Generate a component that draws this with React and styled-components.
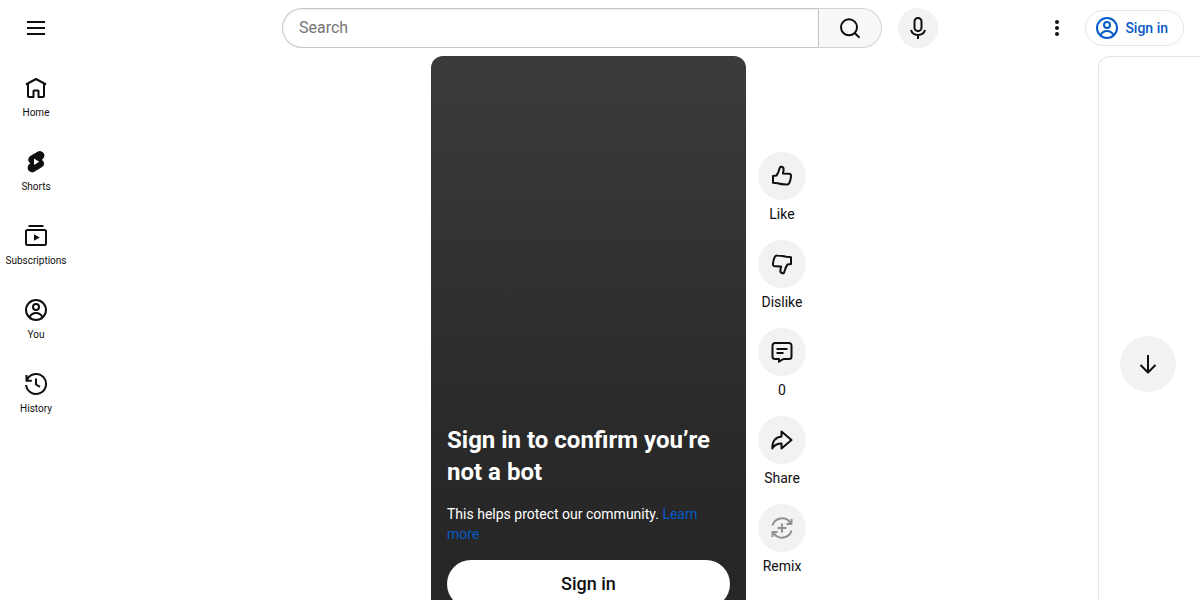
import React, { useState } from 'react';
import styled, { createGlobalStyle } from 'styled-components'

const GlobalStyle = createGlobalStyle`
  * {
    box-sizing: border-box;
  }
  body {
    margin: 0;
    background: #fff;
    color: #0f0f0f;
    font-family: Roboto, Arial, sans-serif;
  }
  button, input {
    font-family: inherit;
    color: inherit;
  }
`

const icons = {
  menu: <path d="M3 6h18M3 12h18M3 18h18" />,
  home: <path d="M2 8.5 12 3l10 5.5M4 8v12a1 1 0 0 0 1 1h4.500v-6a.5.5 0 0 1 .5-.5h4a.5.5 0 0 1 .5.5v6H19a1 1 0 0 0 1-1V8" />,
  shorts: (
    <g stroke="none">
      <path fill="currentColor" d="M13.500 1.800 6.300 6A4.200 4.200 0 0 0 5.900 13l.6.500-.5.300a4.200 4.200 0 0 0 4.300 7.900l7.800-4.600a4.200 4.200 0 0 0 .3-6.900l-.6-.5.500-.3a4.200 4.200 0 0 0-4.800-7.600z" />
      <path fill="#fff" d="M10 8.500v6.500l5.200-3.200z" />
    </g>
  ),
  subscriptions: (
    <>
      <path d="M4.500 2h15" />
      <rect x="2" y="6" width="20" height="15" rx="1.5" />
      <path d="M10 10.2v6.600l5.800-3.300z" fill="currentColor" stroke="none" />
    </>
  ),
  account: (
    <>
      <circle cx="12" cy="12" r="10" />
      <circle cx="12" cy="9" r="3" />
      <path d="M5.500 19.300c1.200-2.600 3.600-4.200 6.500-4.200s5.300 1.600 6.500 4.200" />
    </>
  ),
  history: (
    <>
      <path d="M2.100 13a10 10 0 1 0 1.500-6.400L2.800 8.200M2.500 3v5.800h5.300" />
      <path d="M12 6.500v6l4 2.300" />
    </>
  ),
  search: <path d="M11 3.300a8 8 0 1 1 0 16 8 8 0 0 1 0-16zM16.700 17l4.800 4.700" />,
  mic: (
    <>
      <rect x="8.500" y="2" width="7" height="13" rx="3.500" />
      <path d="M5 14c.9 3.200 3.600 5 7 5s6.100-1.800 7-5M12 19v4" />
    </>
  ),
  more: (
    <g fill="currentColor" stroke="none">
      <circle cx="12" cy="6" r="2" />
      <circle cx="12" cy="12" r="2" />
      <circle cx="12" cy="18" r="2" />
    </g>
  ),
  like: <path d="M3 12l3.500-.5c1.800-2.200 2.500-4.700 3.300-7.700.2-.9.800-1.300 1.600-1.100 1.700.4 2.500 1.700 2.200 3.400L12.900 9.500l5.800.2c1.800.1 2.600 1 2.400 2.500-.3 2.700-1 5.400-2.100 7.200-.5.900-1.400 1.300-2.600 1.200-3-.1-6-.4-8.700-1.300L3 18.700z" />,
  comment: (
    <>
      <path d="M5 3h14a2.500 2.500 0 0 1 2.500 2.500v11A2.500 2.500 0 0 1 19 19h-5.500L9 21.700V19H5a2.500 2.500 0 0 1-2.500-2.500v-11A2.500 2.500 0 0 1 5 3z" />
      <path d="M6.500 9h11M6.500 13h7" />
    </>
  ),
  share: <path d="M11.500 3.500 21.500 12l-10 8.500v-5c-4 0-7.200 1.700-9.200 5 0-7 3.200-11.500 9.200-12z" />,
  remix: (
    <>
      <path d="M2.500 9.500C4.700 1.500 15.800-.5 20.600 7.300M21.500 3v5h-5" />
      <path d="M21.500 14.500c-2.200 8-13.300 10-18.100 2.200M2.500 21v-5h5" />
      <path d="M12 7.500v9M7.500 12h9" />
    </>
  ),
  down: <path d="M12 3v17M4.500 13l7.500 7.500 7.500-7.500" />,
}

const Icon = ({ name, flip }) => (
  <Svg viewBox="0 0 24 24" $flip={flip} aria-hidden="true">{icons[name]}</Svg>
)

const guide = [
  { icon: 'home', label: 'Home' },
  { icon: 'shorts', label: 'Shorts' },
  { icon: 'subscriptions', label: 'Subscriptions' },
  { icon: 'account', label: 'You' },
  { icon: 'history', label: 'History' },
]

const actions = [
  { icon: 'like', label: 'Like' },
  { icon: 'like', label: 'Dislike', flip: true },
  { icon: 'comment', label: '0' },
  { icon: 'share', label: 'Share' },
  { icon: 'remix', label: 'Remix', disabled: true },
]

const App = () => {
  const [query, setQuery] = useState('');

  return (
    <Page>
      <GlobalStyle />
      <Header>
        <Start>
          <IconButton aria-label="Guide"><Icon name="menu" /></IconButton>
        </Start>
        <Center>
          <SearchForm onSubmit={(e) => e.preventDefault()}>
            <SearchInput
              placeholder="Search"
              aria-label="Search"
              value={query}
              onChange={(e) => setQuery(e.target.value)}
            />
            <SearchButton aria-label="Submit search"><Icon name="search" /></SearchButton>
          </SearchForm>
          <IconButton $filled aria-label="Search with your voice"><Icon name="mic" /></IconButton>
        </Center>
        <End>
          <IconButton aria-label="Settings"><Icon name="more" /></IconButton>
          <SignInLink href="#signin"><Icon name="account" />Sign in</SignInLink>
        </End>
      </Header>
      <Body>
        <Guide>
          {guide.map(({ icon, label }) => (
            <GuideItem key={label} href={'#' + label.toLowerCase()}>
              <Icon name={icon} />
              {label}
            </GuideItem>
          ))}
        </Guide>
        <Stage>
          <Player>
            <Title>Sign in to confirm you’re not a bot</Title>
            <Text>This helps protect our community. <Link href="#learn">Learn more</Link></Text>
            <SignInButton>Sign in</SignInButton>
          </Player>
          <Actions>
            {actions.map(({ icon, label, flip, disabled }) => (
              <Action key={label}>
                <Round disabled={disabled}><Icon name={icon} flip={flip} /></Round>
                {label}
              </Action>
            ))}
          </Actions>
        </Stage>
        <Panel>
          <Round $large aria-label="Next video"><Icon name="down" /></Round>
        </Panel>
      </Body>
    </Page>
  )
}

const Page = styled.div`
  height: 100vh;
  display: flex;
  flex-direction: column;
  overflow: hidden;
`

const Svg = styled.svg`
  display: block;
  width: 24px;
  height: 24px;
  flex: none;
  fill: none;
  stroke: currentColor;
  stroke-width: 2;
  stroke-linejoin: round;
  ${props => props.$flip ? 'transform: rotate(180deg);' : ''}
`

const Header = styled.header`
  display: flex;
  align-items: center;
  flex: none;
  height: 56px;
  padding: 0 16px;
`

const Start = styled.div`
  flex: 1 1 148px;
`

const Center = styled.div`
  display: flex;
  gap: 16px;
  flex: 0 1 656px;
`

const End = styled.div`
  display: flex;
  flex: 1 1 128px;
  align-items: center;
  justify-content: flex-end;
  gap: 8px;
`

const IconButton = styled.button`
  display: flex;
  align-items: center;
  justify-content: center;
  flex: none;
  width: 40px;
  height: 40px;
  padding: 0;
  border: 0;
  border-radius: 50%;
  background: ${props => props.$filled ? '#f2f2f2' : 'transparent'};
  cursor: pointer;
`

const SearchForm = styled.form`
  display: flex;
  flex: 1;
  height: 40px;
`

const SearchInput = styled.input`
  flex: 1;
  min-width: 0;
  padding: 0 16px 2px;
  border: 1px solid #c6c6c6;
  border-right: 0;
  border-radius: 20px 0 0 20px;
  box-shadow: inset 0 1px 2px #eee;
  font-size: 16px;
  outline: none;
  &::placeholder {
    color: #757575;
  }
`

const SearchButton = styled.button`
  display: flex;
  align-items: center;
  justify-content: center;
  width: 64px;
  padding: 0;
  border: 1px solid #d3d3d3;
  border-left-color: #c6c6c6;
  border-radius: 0 20px 20px 0;
  background: #f8f8f8;
  cursor: pointer;
`

const SignInLink = styled.a`
  display: flex;
  align-items: center;
  gap: 6px;
  height: 36px;
  padding: 0 15px 0 9px;
  border: 1px solid #e5e5e5;
  border-radius: 18px;
  color: #065bc8;
  font-size: 14px;
  font-weight: 500;
  text-decoration: none;
`

const Body = styled.div`
  display: flex;
  flex: 1;
  min-height: 0;
`

const Guide = styled.nav`
  flex: none;
  width: 72px;
  padding-top: 4px;
`

const GuideItem = styled.a`
  display: flex;
  flex-direction: column;
  align-items: center;
  gap: 6px;
  padding: 16px 0 14px;
  color: #0f0f0f;
  font-size: 10px;
  line-height: 14px;
  text-decoration: none;
`

const Stage = styled.main`
  display: grid;
  grid-template-columns: 1fr 315px 1fr;
  align-items: start;
  flex: 1;
  padding-left: 7px;
`

const Player = styled.section`
  grid-column: 2;
  display: flex;
  flex-direction: column;
  justify-content: flex-end;
  aspect-ratio: 9 / 16;
  padding: 0 16px 8px;
  border-radius: 12px;
  background: linear-gradient(#3b3b3b, #282828 75%, #262626);
  color: #fff;
`

const Title = styled.h1`
  margin: 0 0 16px;
  font-size: 24px;
  line-height: 32px;
  font-weight: 700;
`

const Text = styled.p`
  margin: 0 0 16px;
  font-size: 14px;
  line-height: 20px;
`

const Link = styled.a`
  color: #065bc8;
  text-decoration: none;
`

const SignInButton = styled.button`
  height: 48px;
  padding: 0 16px 2px;
  border: 0;
  border-radius: 24px;
  background: #fff;
  color: #0f0f0f;
  font-size: 18px;
  font-weight: 500;
  cursor: pointer;
`

const Actions = styled.div`
  display: flex;
  flex-direction: column;
  justify-self: start;
  gap: 16px;
  padding: 96px 0 0 12px;
`

const Action = styled.label`
  display: flex;
  flex-direction: column;
  align-items: center;
  gap: 4px;
  font-size: 14px;
  line-height: 20px;
`

const Round = styled.button`
  display: flex;
  align-items: center;
  justify-content: center;
  width: ${props => props.$large ? '56px' : '48px'};
  height: ${props => props.$large ? '56px' : '48px'};
  padding: 0;
  border: 0;
  border-radius: 50%;
  background: #f2f2f2;
  cursor: pointer;
  &:disabled {
    color: #909090;
    cursor: default;
  }
`

const Panel = styled.aside`
  display: flex;
  align-items: center;
  flex: none;
  width: 102px;
  height: 616px;
  padding-left: 21px;
  border: 1px solid #e5e5e5;
  border-right: 0;
  border-radius: 12px 0 0 12px;
`

export default App
